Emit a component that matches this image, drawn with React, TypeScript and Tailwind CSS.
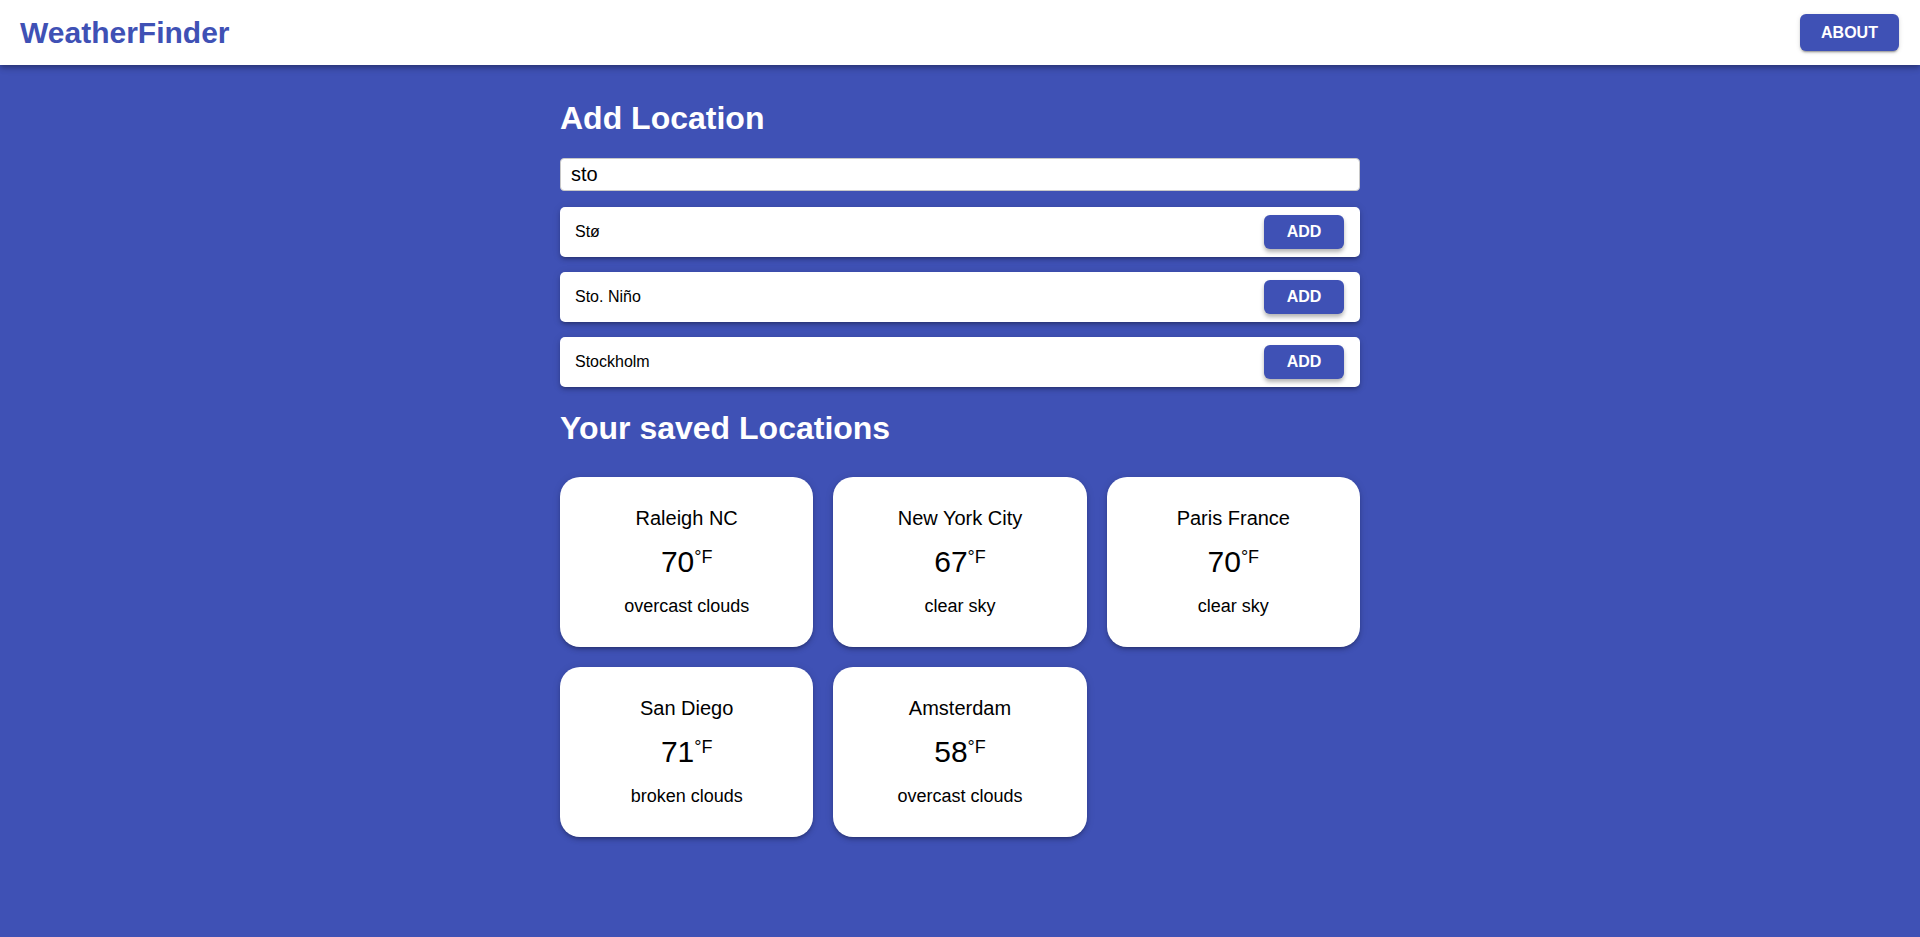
import React from 'react'

const suggestions = ['Stø', 'Sto. Niño', 'Stockholm']

const saved = [
  { name: 'Raleigh NC', temp: 70, desc: 'overcast clouds' },
  { name: 'New York City', temp: 67, desc: 'clear sky' },
  { name: 'Paris France', temp: 70, desc: 'clear sky' },
  { name: 'San Diego', temp: 71, desc: 'broken clouds' },
  { name: 'Amsterdam', temp: 58, desc: 'overcast clouds' },
]

const elevation =
  'shadow-[0px_3px_3px_-2px_rgba(0,0,0,0.2),0px_3px_4px_0px_rgba(0,0,0,0.14),0px_1px_8px_0px_rgba(0,0,0,0.12)]'

function LocationCard({ name, temp, desc }: { name: string; temp: number; desc: string }) {
  return (
    <div className={`h-[170px] rounded-[20px] bg-white pt-[30px] text-center text-black ${elevation}`}>
      <div className="text-[20px] leading-[23px]">{name}</div>
      <div className="mt-[14px] flex justify-center">
        <span className="text-[30px] leading-[35px]">{temp}</span>
        <span className="mt-[4px] text-[18px] leading-[18px]">°F</span>
      </div>
      <div className="mt-[17px] text-[18px] leading-[21px]">{desc}</div>
    </div>
  )
}

export default function App() {
  return (
    <div className="min-h-screen bg-[#3f51b5] font-['Liberation_Sans',Arial,sans-serif]">
      <header className="relative z-10 flex h-[65px] items-center justify-between bg-white pl-5 pr-[21px] shadow-[0px_2px_4px_-1px_rgba(0,0,0,0.2),0px_4px_5px_0px_rgba(0,0,0,0.14),0px_1px_10px_0px_rgba(0,0,0,0.12)]">
        <h1 className="text-[30px] font-bold leading-[35px] text-[#3f51b5]">WeatherFinder</h1>
        <button className="h-[37px] w-[99px] rounded-[6px] bg-[#3f51b5] text-[16px] font-bold text-white shadow-[0px_3px_1px_-2px_rgba(0,0,0,0.2),0px_2px_2px_0px_rgba(0,0,0,0.14),0px_1px_5px_0px_rgba(0,0,0,0.12)]">
          ABOUT
        </button>
      </header>

      <main className="mx-auto w-[800px] pt-[35px] pb-10">
        <h2 className="text-[32px] font-bold leading-[37px] text-white">Add Location</h2>
        <input
          readOnly
          value="sto"
          className="mt-[21px] h-[33px] w-full rounded-[4px] border border-[#c8c8c8] bg-white px-[10px] text-[20px] text-black outline-none"
        />

        <div className="mt-[16px] flex flex-col gap-[15px]">
          {suggestions.map(s => (
            <div
              key={s}
              className={`flex h-[50px] items-center justify-between rounded-[5px] bg-white pl-[15px] pr-4 ${elevation}`}
            >
              <span className="text-[16px] text-black">{s}</span>
              <button className="h-[34px] w-[80px] rounded-[6px] bg-[#3f51b5] text-[16px] font-bold text-white shadow-[0px_3px_4px_0px_rgba(0,0,0,0.3)]">
                ADD
              </button>
            </div>
          ))}
        </div>

        <h2 className="mt-[23px] text-[32px] font-bold leading-[37px] text-white">Your saved Locations</h2>

        <div className="mt-[30px] grid grid-cols-3 gap-5">
          {saved.map(loc => (
            <LocationCard key={loc.name} {...loc} />
          ))}
        </div>
      </main>
    </div>
  )
}
